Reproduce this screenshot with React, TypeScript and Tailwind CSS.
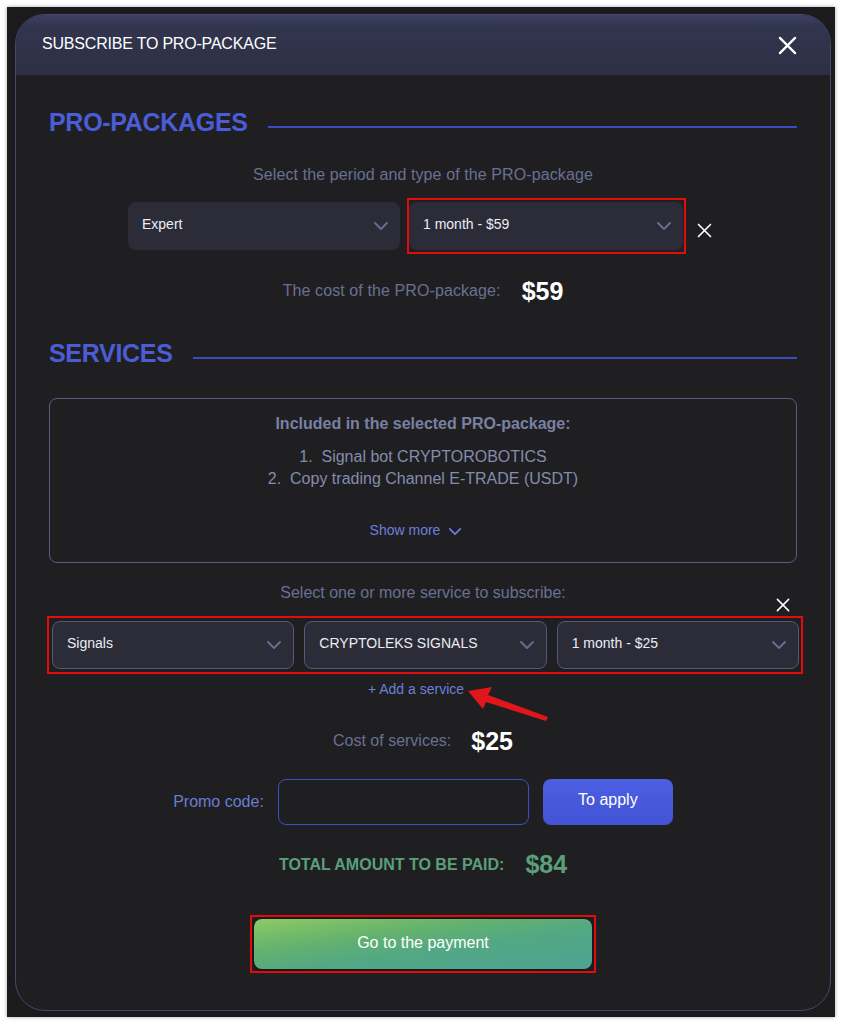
import React from "react";

function Chevron({ className = "" }: { className?: string }) {
  return (
    <svg width="16" height="10" viewBox="0 0 16 10" fill="none" className={className}>
      <path d="M2 2l6 6 6-6" stroke="currentColor" strokeWidth="2" strokeLinecap="round" strokeLinejoin="round" />
    </svg>
  );
}

function CloseIcon({ size, stroke = 2 }: { size: number; stroke?: number }) {
  return (
    <svg width={size} height={size} viewBox="0 0 20 20" fill="none">
      <path d="M2 2l16 16M18 2L2 18" stroke="white" strokeWidth={stroke} strokeLinecap="round" />
    </svg>
  );
}

function Select({ label, bordered, className = "" }: { label: string; bordered?: boolean; className?: string }) {
  return (
    <div
      className={`flex h-[48px] items-center justify-between rounded-[8px] bg-[#2c2c39] pb-[3px] pl-[14px] pr-[11px] ${
        bordered ? "border border-[#535979]" : ""
      } ${className}`}
    >
      <span className="text-[14px] text-[#ececf2]">{label}</span>
      <Chevron className="mt-[3px] text-[#666c90]" />
    </div>
  );
}

function SectionTitle({ title }: { title: string }) {
  return (
    <div className="flex items-end gap-[20px]">
      <h2 className="text-[25px] font-bold leading-[28px] tracking-[-0.3px] text-[#4a5dd6]">{title}</h2>
      <div className="mb-[8px] h-[2px] flex-1 bg-[#3a4cc2]" />
    </div>
  );
}

export default function App() {
  const services = ["Signals", "CRYPTOLEKS SIGNALS", "1 month - $25"];

  return (
    <div className="h-[1024px] w-[842px] bg-white pl-[7px] pr-[7px] pt-[7px] font-['Liberation_Sans',Arial,sans-serif]">
      <div className="h-[1010px] bg-[#1b1b1d] pl-[8px] pr-[4px] pt-[7px] shadow-[0_0_4px_rgba(0,0,0,0.35)]">
        <div className="relative flex h-[997px] flex-col overflow-hidden rounded-[30px] border border-[#46486a] bg-[#1f1f22]">
          {/* header */}
          <div className="flex h-[60px] shrink-0 items-center justify-between bg-[linear-gradient(180deg,#3d4163_0%,#32354e_18%,#2d2f44_100%)] pl-[26px] pr-[33px]">
            <span className="mb-[2px] text-[16px] tracking-[-0.2px] text-white">SUBSCRIBE TO PRO-PACKAGE</span>
            <CloseIcon size={19} stroke={2.4} />
          </div>

          <div className="flex flex-col px-[33px]">
            <div className="mt-[33px]">
              <SectionTitle title="PRO-PACKAGES" />
            </div>

            <p className="mt-[29px] text-center text-[16px] leading-[20px] tracking-[0.1px] text-[#6a7092]">
              Select the period and type of the PRO-package
            </p>

            <div className="mt-[13px] flex items-center pl-[79px]">
              <Select label="Expert" className="w-[272px]" />
              <div className="ml-[7px] border-2 border-[#e30b0b] py-[2px] pr-[1px]">
                <Select label="1 month - $59" className="w-[274px]" />
              </div>
              <div className="ml-[11px] mt-[8px]">
                <CloseIcon size={15} stroke={2.2} />
              </div>
            </div>

            <div className="mt-[23px] flex items-center justify-center gap-[21px] leading-[28px]">
              <span className="text-[16px] tracking-[0.1px] text-[#6a7092]">The cost of the PRO-package:</span>
              <span className="text-[25px] font-bold text-white">$59</span>
            </div>

            <div className="mt-[34px]">
              <SectionTitle title="SERVICES" />
            </div>

            <div className="mt-[31px] flex h-[165px] flex-col items-center rounded-[8px] border border-[#565c7c]">
              <p className="mt-[15px] text-[16px] font-bold leading-[20px] text-[#7a80a2]">
                Included in the selected PRO-package:
              </p>
              <ol className="mt-[12px] text-center text-[16px] leading-[22px] text-[#858bad]">
                <li>1.&nbsp; Signal bot CRYPTOROBOTICS</li>
                <li>2.&nbsp; Copy trading Channel E-TRADE (USDT)</li>
              </ol>
              <div className="mt-[30px] flex items-center gap-[8px] pr-[14px] text-[14px] leading-[20px] text-[#6b7edf]">
                <span>Show more</span>
                <Chevron className="mt-[2px] h-[9px] w-[14px]" />
              </div>
            </div>

            <div className="relative">
              <p className="mt-[20px] text-center text-[16px] leading-[20px] text-[#6a7092]">
                Select one or more service to subscribe:
              </p>
              <div className="absolute right-[7px] top-[35px]">
                <CloseIcon size={14} stroke={2.2} />
              </div>
            </div>

            <div className="-ml-[2px] -mr-[6px] mt-[13px] grid grid-cols-3 gap-[10px] border-2 border-[#e30b0b] py-[3px] pl-[3px] pr-[2px]">
              {services.map((s) => (
                <Select key={s} label={s} bordered />
              ))}
            </div>

            <div className="relative mt-[5px] flex justify-center pr-[14px]">
              <span className="text-[14px] leading-[20px] text-[#6b7ed8]">+ Add a service</span>
              <svg className="absolute left-[410px] top-[0px]" width="100" height="50" viewBox="0 0 100 50">
                <polygon points="9,12 33,8 29,16 89,38 87,42 27,23 24,30" fill="#e0161b" />
              </svg>
            </div>

            <div className="mt-[28px] flex items-center justify-center gap-[20px] leading-[28px]">
              <span className="text-[16px] text-[#6a7092]">Cost of services:</span>
              <span className="text-[25px] font-bold text-white">$25</span>
            </div>

            <div className="mt-[24px] flex items-center justify-center gap-[14px]">
              <span className="text-[16px] text-[#6b7cd0]">Promo code:</span>
              <input className="h-[46px] w-[251px] rounded-[8px] border border-[#3d4fc4] bg-transparent outline-none" />
              <button className="h-[46px] w-[130px] rounded-[8px] bg-[linear-gradient(180deg,#4c5ee2_0%,#4253d4_100%)] pb-[4px] text-[16px] text-white">
                To apply
              </button>
            </div>

            <div className="mt-[24px] flex items-center justify-center gap-[21px] leading-[28px]">
              <span className="mt-[2px] text-[16px] font-bold text-[#5a9f7a]">TOTAL AMOUNT TO BE PAID:</span>
              <span className="text-[25px] font-bold text-[#5a9f7a]">$84</span>
            </div>

            <div className="mt-[36px] flex justify-center">
              <div className="border-2 border-[#e30b0b] p-[2px]">
                <button className="h-[50px] w-[338px] rounded-[8px] bg-[linear-gradient(172deg,#8dca62_0%,#62b16f_35%,#52a785_60%,#4da390_100%)] pb-[2px] text-[16px] text-white shadow-[0_0_3px_rgba(0,0,0,0.6)]">
                  Go to the payment
                </button>
              </div>
            </div>
          </div>
        </div>
      </div>
    </div>
  );
}
